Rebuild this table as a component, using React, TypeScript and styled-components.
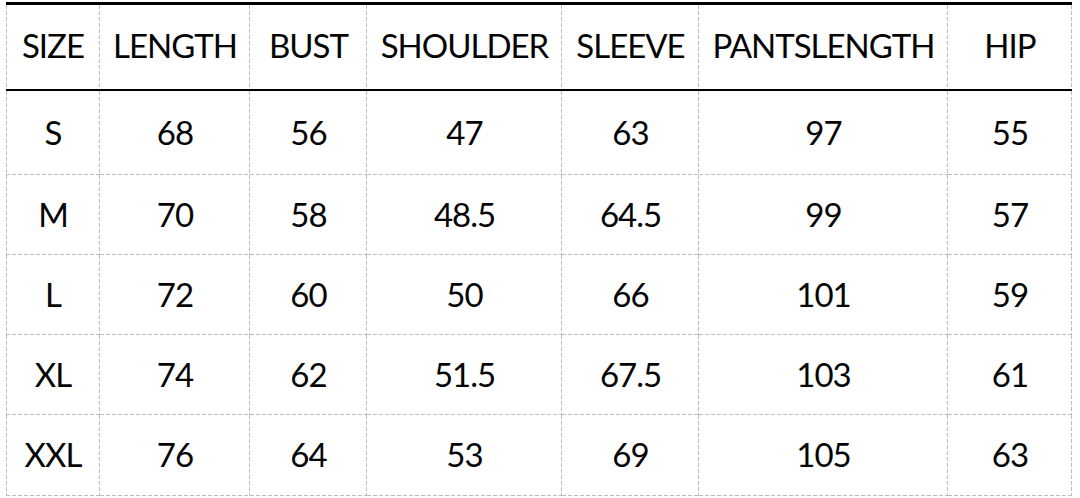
import React from "react";
import styled, { createGlobalStyle, css } from "styled-components";

const Global = createGlobalStyle`
  html, body { margin: 0; padding: 0; background: #ffffff; }
  body { font-family: "Lato", "Noto Sans", sans-serif; color: #000; }
`;

const Wrap = styled.div`
  padding: 2px 0 0 6px;
`;

const Table = styled.table`
  border-collapse: separate;
  border-spacing: 0;
  table-layout: fixed;
  width: 1066px;
  font-family: "Lato", "Noto Sans", sans-serif;
  font-size: 33px;
  letter-spacing: -1px;
  color: #050505;
`;

const Col = styled.col<{ $w: number }>`
  width: ${(p) => p.$w}px;
`;

const DASH = "#bdbdbd";
const vDash = `repeating-linear-gradient(to bottom, ${DASH} 0 4px, transparent 4px 6px)`;
const hDash = `repeating-linear-gradient(to right, ${DASH} 0 4px, transparent 4px 6px)`;

const dashed = (bottom: boolean) => css`
  background-repeat: no-repeat;
  background-image: ${vDash}${bottom ? `, ${hDash}` : ""};
  background-size: 1px 100%${bottom ? ", 100% 1px" : ""};
  background-position: right top${bottom ? ", left bottom" : ""};
  &:first-child {
    background-image: ${vDash}, ${vDash}${bottom ? `, ${hDash}` : ""};
    background-size: 1px 100%, 1px 100%${bottom ? ", 100% 1px" : ""};
    background-position: right top, left top${bottom ? ", left bottom" : ""};
  }
`;

const Head = styled.th`
  height: 89px;
  box-sizing: border-box;
  font-weight: 400;
  padding: 0 0 4px;
  text-align: center;
  vertical-align: middle;
  border-top: 3px solid #000;
  border-bottom: 2px solid #000;
  white-space: nowrap;
  ${dashed(false)}
`;

const Row = styled.tr<{ $h: number }>`
  height: ${(p) => p.$h}px;
`;

const Cell = styled.td`
  padding: 0 0 3px;
  text-align: center;
  vertical-align: middle;
  white-space: nowrap;
  ${dashed(true)}
`;

const headers = ["SIZE", "LENGTH", "BUST", "SHOULDER", "SLEEVE", "PANTSLENGTH", "HIP"];
const widths = [94, 150, 117, 195, 137, 249, 124];
const rows: string[][] = [
  ["S", "68", "56", "47", "63", "97", "55"],
  ["M", "70", "58", "48.5", "64.5", "99", "57"],
  ["L", "72", "60", "50", "66", "101", "59"],
  ["XL", "74", "62", "51.5", "67.5", "103", "61"],
  ["XXL", "76", "64", "53", "69", "105", "63"],
];
const heights = [84, 80, 80, 80, 81];

export default function App() {
  return (
    <>
      <Global />
      <Wrap>
        <Table>
          <colgroup>
            {widths.map((w, i) => (
              <Col key={i} $w={w} />
            ))}
          </colgroup>
          <thead>
            <tr>
              {headers.map((h) => (
                <Head key={h}>{h}</Head>
              ))}
            </tr>
          </thead>
          <tbody>
            {rows.map((r, i) => (
              <Row key={r[0]} $h={heights[i]}>
                {r.map((c, j) => (
                  <Cell key={j}>{c}</Cell>
                ))}
              </Row>
            ))}
          </tbody>
        </Table>
      </Wrap>
    </>
  );
}
